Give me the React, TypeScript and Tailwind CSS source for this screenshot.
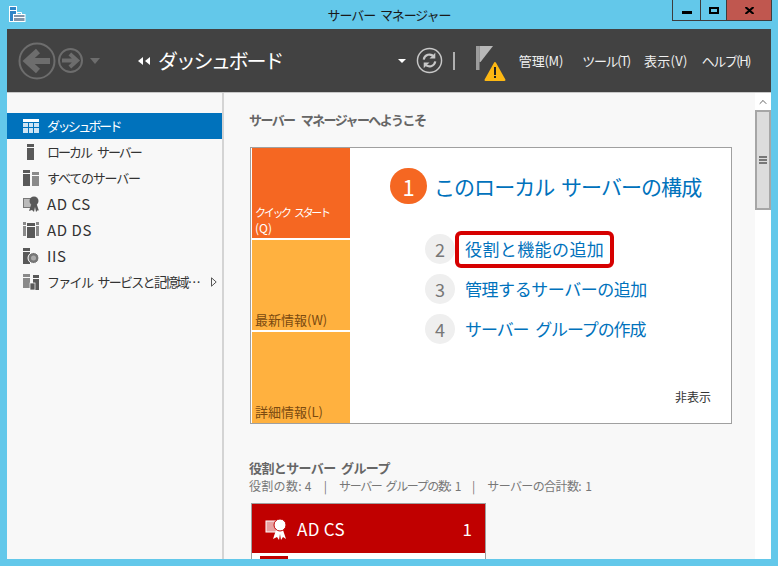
import { ChevronUp } from "lucide-react";

const navItems = [
  { label: "ローカル サーバー", icon: "local", text: "tracking-[-2px] [word-spacing:5px]" },
  { label: "すべてのサーバー", icon: "all", text: "tracking-[-1.2px]" },
  { label: "AD CS", icon: "cs", text: "text-[15px] tracking-[0.6px]" },
  { label: "AD DS", icon: "ds", text: "text-[15px] tracking-[0.6px]" },
  { label: "IIS", icon: "iis", text: "text-[15px] tracking-[0.6px]" },
];

const steps = [
  { n: 2, label: "役割と機能の追加", text: "tracking-[0.4px]", boxed: true },
  { n: 3, label: "管理するサーバーの追加", text: "tracking-[-0.45px]", boxed: false },
  { n: 4, label: "サーバー グループの作成", text: "tracking-[-1.1px] [word-spacing:4px]", boxed: false },
];

function NavIcon({ kind }: { kind: string }) {
  const c = "#595959";
  return (
    <svg width="16" height="16" viewBox="0 0 16 16" fill={c} className="shrink-0">
      {kind === "local" && (
        <>
          <rect x="4" y="0" width="7" height="3" />
          <rect x="4" y="4" width="7" height="12" />
        </>
      )}
      {kind === "all" && (
        <>
          <rect x="0" y="0" width="7" height="3" />
          <rect x="0" y="4" width="7" height="12" />
          <rect x="9" y="2" width="7" height="3" fill="#8a8a8a" />
          <rect x="9" y="6" width="7" height="10" fill="#8a8a8a" />
        </>
      )}
      {kind === "cs" && (
        <>
          <rect x="0.5" y="2.5" width="10" height="9" fill="#bbb" stroke="#777" />
          <path d="M8 9l-2 6 3-1 2 2 1-5 1 5 2-2 1 1-2-6z" />
          <circle cx="11" cy="5" r="4.5" />
        </>
      )}
      {kind === "ds" && (
        <>
          <rect x="0" y="0" width="3" height="3" fill="#8a8a8a" />
          <rect x="13" y="0" width="3" height="3" fill="#8a8a8a" />
          <rect x="0" y="4" width="3" height="10" fill="#8a8a8a" />
          <rect x="13" y="4" width="3" height="10" fill="#8a8a8a" />
          <rect x="4" y="1" width="8" height="3" />
          <rect x="4" y="5" width="8" height="11" />
        </>
      )}
      {kind === "iis" && (
        <>
          <rect x="0" y="0" width="7" height="3" />
          <rect x="0" y="4" width="7" height="12" />
          <circle cx="10.5" cy="10" r="5.5" fill="#777" stroke="#fff" />
          <circle cx="10.5" cy="10" r="2.5" fill="#aaa" />
        </>
      )}
      {kind === "file" && (
        <>
          <rect x="0" y="0" width="7" height="3" fill="#8a8a8a" />
          <rect x="0" y="4" width="7" height="10" fill="#8a8a8a" />
          <rect x="10" y="1" width="6" height="3" />
          <rect x="10" y="5" width="6" height="11" />
          <rect x="7" y="9" width="5" height="7" fill="#595959" stroke="#fff" strokeWidth="0.7" />
        </>
      )}
    </svg>
  );
}

function WindowIcon() {
  return (
    <svg width="17" height="16" viewBox="0 0 17 16" fill="none" stroke="#fff">
      <rect x="0.5" y="0.5" width="7" height="4" fill="#2f86c8" />
      <rect x="0.5" y="4.5" width="7" height="11" fill="#2f86c8" />
      <rect x="4.5" y="8.5" width="11.5" height="7" fill="#8296ab" />
      <path d="M8 8.5V6.5h4.5v2M4.5 11.5H16" />
    </svg>
  );
}

function Arrow({ size, flip }: { size: number; flip?: boolean }) {
  return (
    <svg width={size} height={size} viewBox="0 0 38 38" fill="none" stroke="#6d6d6d" className={flip ? "-scale-x-100" : ""}>
      <circle cx="19" cy="19" r="17.5" strokeWidth={size > 30 ? 2 : 3} />
      <path d="M32 19H10M20 9 9 19l11 10" strokeWidth="6" />
    </svg>
  );
}

export default function App() {
  return (
    <div className="w-[778px] h-[566px] overflow-hidden bg-[#63c8ea] text-[#333] flex flex-col font-['Noto_Sans_CJK_JP',sans-serif]">
      {/* title bar */}
      <div className="h-[29px] shrink-0 grid grid-cols-[1fr_auto_1fr] items-start">
        <div className="pl-[9px] pt-[6px]">
          <WindowIcon />
        </div>
        <div className="pt-[5px] text-[13px] leading-[20px] tracking-[-1.1px] [word-spacing:3px] text-[#1a1a1a]">サーバー マネージャー</div>
        <div className="flex justify-end pr-[6px]">
          <div className="h-[21px] flex border border-t-0 border-[#3d3d3d]">
            <div className="w-[28px] flex items-center justify-center border-r border-[#3d3d3d] pt-[4px]">
              <div className="w-[10px] h-[3px] bg-black" />
            </div>
            <div className="w-[26px] flex items-center justify-center border-r border-[#3d3d3d]">
              <div className="w-[10px] h-[7px] border-2 border-black" />
            </div>
            <div className="w-[44px] bg-[#c0574f] flex items-center justify-center">
              <svg width="9" height="7" viewBox="0 0 9 7" stroke="#000" strokeWidth="2">
                <path d="M0.5 0l8 7M8.5 0l-8 7" />
              </svg>
            </div>
          </div>
        </div>
      </div>

      <div className="flex-1 mx-[7px] mb-[7px] flex flex-col min-h-0">
        {/* toolbar */}
        <div className="h-[64px] shrink-0 bg-[#424242] border-b border-[#c8c8c8] flex items-center text-white">
          <div className="ml-[11px] flex items-center gap-[2px]">
            <Arrow size={38} />
            <Arrow size={25} flip />
            <div className="ml-[5px] w-0 h-0 border-x-[5px] border-x-transparent border-t-[6px] border-t-[#6d6d6d]" />
          </div>
          <div className="ml-[38px] flex gap-[2px]">
            <div className="w-0 h-0 border-y-[4px] border-y-transparent border-r-[5px] border-r-white" />
            <div className="w-0 h-0 border-y-[4px] border-y-transparent border-r-[5px] border-r-white" />
          </div>
          <div className="ml-[8px] text-[20px] leading-[30px] tracking-[-2.3px] flex-1">ダッシュボード</div>
          <div className="w-0 h-0 border-x-[4px] border-x-transparent border-t-[4px] border-t-white" />
          <svg width="27" height="27" viewBox="0 0 28 28" fill="none" stroke="#c8c8c8" className="ml-[10px]">
            <circle cx="14" cy="14" r="12.5" strokeWidth="1.5" />
            <path d="M8 13a6 6 0 0 1 10.5-3M20 15a6 6 0 0 1-10.5 3" strokeWidth="2.2" />
            <path d="M20 6v6h-6zM8 22v-6h6z" fill="#c8c8c8" stroke="none" />
          </svg>
          <div className="ml-[10px] w-[2px] h-[18px] bg-[#b0b0b0]" />
          <svg width="30" height="36" viewBox="0 0 30 36" className="ml-[21px] mt-[7px]">
            <rect x="0" y="0" width="3.5" height="24" fill="#9c9c9c" />
            <path d="M3.5 0H17L4.5 16h-1z" fill="#b8b8b8" />
            <path d="M19 17 28.5 34h-19z" fill="#fdb813" stroke="#fdb813" strokeWidth="2" strokeLinejoin="round" />
            <rect x="18" y="21" width="2" height="8" fill="#222" />
            <rect x="18" y="30" width="2" height="2" fill="#222" />
          </svg>
          <div className="ml-[13px] mr-[21px] flex gap-[14px] text-[13px] leading-[18px] text-[#f0f0f0] whitespace-nowrap">
            <span className="mr-[5px] tracking-[-0.2px]">管理(M)</span>
            <span className="tracking-[-1.3px]">ツール(T)</span>
            <span className="tracking-[0.3px]">表示(V)</span>
            <span className="tracking-[-1.5px]">ヘルプ(H)</span>
          </div>
        </div>

        <div className="flex-1 flex min-h-0 bg-[#f8f8f8]">
          {/* sidebar */}
          <nav className="w-[215px] shrink-0 pt-[20px] text-[13px] text-[#333]">
            <div className="h-[26px] bg-[#0072bc] text-white flex items-center pl-[16px] gap-[8px]">
              <svg width="16" height="14" viewBox="0 0 16 14">
                <rect width="16" height="3" fill="#fff" />
                <rect y="4" width="5" height="4" fill="#cfe4f3" />
                <rect x="6" y="4" width="4" height="4" fill="#cfe4f3" />
                <rect x="11" y="4" width="5" height="4" fill="#cfe4f3" />
                <rect y="9" width="5" height="5" fill="#cfe4f3" />
                <rect x="6" y="9" width="4" height="5" fill="#cfe4f3" />
                <rect x="11" y="9" width="5" height="5" fill="#cfe4f3" />
              </svg>
              <span className="leading-[18px] tracking-[-2.6px]">ダッシュボード</span>
            </div>
            {navItems.map((item) => (
              <div key={item.label} className="h-[26px] flex items-center pl-[16px] gap-[8px]">
                <NavIcon kind={item.icon} />
                <span className={`leading-[18px] ${item.text}`}>{item.label}</span>
              </div>
            ))}
            <div className="h-[26px] flex items-center pl-[16px] gap-[8px]">
              <NavIcon kind="file" />
              <span className="leading-[18px] tracking-[-1.7px] [word-spacing:4px] whitespace-nowrap">ファイル サービスと記憶域…</span>
              <svg width="6" height="10" viewBox="0 0 6 10" fill="none" stroke="#555" className="ml-[4px] shrink-0">
                <path d="M0.5 0.8 5.2 5 0.5 9.2z" />
              </svg>
            </div>
          </nav>
          <div className="w-[2px] bg-[#d4d4d4] shrink-0" />

          {/* main */}
          <main className="flex-1 min-w-0 overflow-hidden pl-[25px] pt-[18px]">
            <h1 className="text-[13px] font-bold leading-[18px] tracking-[-1.6px] [word-spacing:5px] text-[#666]">サーバー マネージャーへようこそ</h1>

            <div className="mt-[18px] ml-[1px] w-[482px] h-[277px] border border-[#a0a0a0] bg-white flex">
              <div className="ml-[1px] w-[98px] shrink-0 flex flex-col gap-[2px] text-[13px] leading-[15px]">
                <div className="h-[90px] bg-[#f56722] text-white px-[3px] pb-[2px] flex items-end">
                  <span className="text-[11px] tracking-[-2.3px] [word-spacing:4px]">クイック スタート<br /><span className="tracking-[0px] text-[12px]">(Q)</span></span>
                </div>
                <div className="h-[90px] bg-[#ffb13f] text-[#7a4a10] px-[3px] pb-[3px] flex items-end">最新情報(W)</div>
                <div className="h-[91px] bg-[#ffb13f] text-[#7a4a10] px-[3px] pb-[4px] flex items-end">詳細情報(L)</div>
              </div>
              <div className="flex-1 flex flex-col pl-[40px] text-[#0072bc]">
                <div className="mt-[20px] flex items-center gap-[7px]">
                  <div className="w-[37px] h-[36px] rounded-full bg-[#f56722] text-white flex items-center justify-center text-[22px]">1</div>
                  <span className="text-[21px] leading-[34px] tracking-[-0.95px] [word-spacing:3px] whitespace-nowrap">このローカル サーバーの構成</span>
                </div>
                <div className="mt-[30px] ml-[35px] flex flex-col gap-[10px]">
                  {steps.map((s) => (
                    <div key={s.n} className="h-[30px] flex items-center gap-[10px]">
                      <div className="w-[30px] h-[30px] rounded-full bg-[#efefef] text-[#777] flex items-center justify-center text-[18px]">{s.n}</div>
                      {s.boxed ? (
                        <span className={`h-[37px] -ml-[10px] px-[6px] flex items-center text-[17px] leading-[24px] border-[4px] border-[#d60000] rounded-[6px] whitespace-nowrap ${s.text}`}>
                          {s.label}
                        </span>
                      ) : (
                        <span className={`text-[17px] leading-[24px] whitespace-nowrap ${s.text}`}>{s.label}</span>
                      )}
                    </div>
                  ))}
                </div>
                <div className="mt-auto mb-[17px] mr-[20px] text-right text-[12px] leading-[18px] text-[#333]">非表示</div>
              </div>
            </div>

            <h2 className="mt-[35px] text-[13px] font-bold leading-[18px] tracking-[-0.6px] [word-spacing:3px] text-[#666]">役割とサーバー グループ</h2>
            <div className="flex gap-[12px] text-[12px] leading-[17px] text-[#777] whitespace-nowrap">
              <span className="tracking-[0.3px]">役割の数: 4</span>
              <span>|</span>
              <span className="tracking-[-1.4px] [word-spacing:3px]">サーバー グループの数: 1</span>
              <span>|</span>
              <span className="tracking-[-0.6px] [word-spacing:2px]">サーバーの合計数: 1</span>
            </div>

            <div className="mt-[9px] ml-[2px] w-[235px] border border-b-0 border-[#a0a0a0] bg-white">
              <div className="h-[49px] bg-[#c00000] text-white flex items-center pl-[13px] pr-[13px]">
                <svg width="22" height="22" viewBox="0 0 22 22" fill="#fff">
                  <rect x="1" y="3" width="13" height="11" fill="#e8a0a0" stroke="#fff" />
                  <path d="M11 12l-3 9 4-2 2 3 1-6 1 6 2-3 3 2-3-9z" />
                  <circle cx="15" cy="7" r="6" stroke="#c00000" />
                </svg>
                <span className="ml-[10px] text-[17px] leading-[24px] tracking-[0.3px] flex-1">AD CS</span>
                <span className="text-[17px] leading-[24px]">1</span>
              </div>
              <div className="mt-[3px] ml-[8px] w-[28px] h-[10px] bg-[#c00000]" />
            </div>
          </main>

          {/* scrollbar */}
          <div className="w-[16px] shrink-0 bg-white flex flex-col">
            <div className="h-[17px] flex items-center justify-center">
              <ChevronUp size={12} strokeWidth={2} className="text-[#666]" />
            </div>
            <div className="h-[100px] bg-[#dcdcdc] border-2 border-[#a6a6a6] flex flex-col items-center justify-center gap-[1px]">
              <div className="w-[8px] h-[2px] bg-[#777]" />
              <div className="w-[8px] h-[2px] bg-[#777]" />
              <div className="w-[8px] h-[2px] bg-[#777]" />
            </div>
          </div>
        </div>
      </div>
    </div>
  );
}
